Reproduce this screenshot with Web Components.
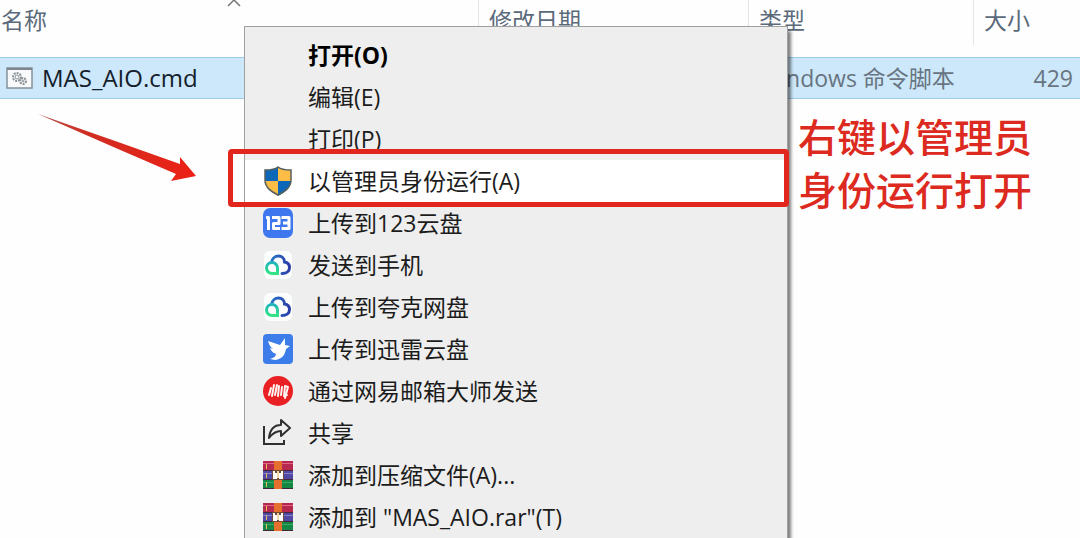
<!DOCTYPE html>
<html lang="zh-CN">
<head>
<meta charset="utf-8">
<meta name="viewport" content="width=device-width, initial-scale=1">
<title>MAS_AIO.cmd</title>
<style>
  body { margin: 0; background: #fefefe; font-family: "Open Sans", "Noto Sans CJK SC", sans-serif; font-size: 23px; }
</style>
</head>
<body>
<explorer-window>
  <file-list></file-list>
  <context-menu slot="overlay">
    <menu-item strong>打开(O)</menu-item>
    <menu-item>编辑(E)</menu-item>
    <menu-item>打印(P)</menu-item>
    <menu-item icon="shield" marked>以管理员身份运行(A)</menu-item>
    <menu-item icon="pan123">上传到123云盘</menu-item>
    <menu-item icon="quark">发送到手机</menu-item>
    <menu-item icon="quark">上传到夸克网盘</menu-item>
    <menu-item icon="bird">上传到迅雷云盘</menu-item>
    <menu-item icon="mail">通过网易邮箱大师发送</menu-item>
    <menu-item icon="share">共享</menu-item>
    <menu-item icon="rar">添加到压缩文件(A)...</menu-item>
    <menu-item icon="rar">添加到 "MAS_AIO.rar"(T)</menu-item>
  </context-menu>
  <pointer-arrow slot="overlay"></pointer-arrow>
  <callout-note slot="overlay">右键以管理员<br>身份运行打开</callout-note>
</explorer-window>

<script>
const define = (name, html, setup) => customElements.define(name, class extends HTMLElement {
  connectedCallback() {
    if (this.shadowRoot) return;
    this.attachShadow({ mode: "open" }).innerHTML = html;
    if (setup) setup(this, this.shadowRoot);
  }
});

const ICONS = {
  shield: `<defs><clipPath id="s"><path d="M15 1C12 3.500 7 4 2 4V14C2 22 9 27 15 30C21 27 28 22 28 14V4C23 4 18 3.500 15 1Z"/></clipPath></defs>
    <g clip-path="url(#s)"><path fill="#0d67b8" d="M0 0H15V15H0zM15 15H30V31H15z"/><path fill="#fbbd45" d="M15 0H30V15H15zM0 15H15V31H0z"/></g>
    <path fill="none" stroke="#56605f" stroke-width="1.500" d="M15 1C12 3.500 7 4 2 4V14C2 22 9 26 15 29C21 26 28 22 28 14V4C23 4 18 3.500 15 1Z"/>`,
  pan123: `<rect width="30" height="30" rx="7" fill="#3f78ee"/><g fill="none" stroke="#fff" stroke-width="3" stroke-linejoin="round"><path d="M3 9.500H5.500V22M9 9.500H16V15.500H10.500V20.500H17M18.500 9.500H26V20.500H18.500M20 15H26"/></g>`,
  quark: `<rect x="1" y="1" width="28" height="28" rx="6" fill="#fcfefe"/><defs><linearGradient id="q" x1="0" y1="1" x2="0" y2="0"><stop stop-color="#33e487"/><stop offset="1" stop-color="#20b5bd"/></linearGradient><linearGradient id="r"><stop stop-color="#2874c8"/><stop offset="1" stop-color="#2a3da8"/></linearGradient></defs>
    <g fill="none" stroke-width="3" stroke-linecap="round"><path stroke="url(#r)" d="M8.500 12.500C9 8.500 12 6 15.500 6C19 6 21.500 8.500 21.500 12C25 12.500 26.500 14.500 26.500 17.500C26.500 21 23.500 23.500 19 23.500"/><path stroke="url(#q)" d="M14.500 23.500V18A5.500 5.500 0 1 0 9 23.500Z"/></g>`,
  bird: `<rect width="30" height="30" rx="4" fill="#3d7de9"/><path fill="#fff" d="M5 7L17 11L22 4L22 11L27 12L23 15C22 20 20 25 12 26L7 25C11 24 13 22 13 20C10 19 8 17 7 14L10 15C7 13 6 10 5 7Z"/>`,
  mail: `<circle cx="15" cy="15" r="15" fill="#e92024"/><g fill="none" stroke="#fff5f2" stroke-width="2" stroke-linecap="round"><path d="M6 19L8 12M9 20L11 9M12 19L14 9M15 20L16 10M18 19L19 11M21 20L22 10M22 22L25 11M22 19H24M22 10L25 11"/></g>`,
  share: `<g fill="none" stroke="#303030" stroke-width="2"><path d="M1 8V26H21V22"/><path stroke-linejoin="round" d="M6 20C7 11 11 7 18 7V2L27 10L18 18V13C13 13 9 16 6 20Z"/></g>`,
  rar: `<rect y="1" width="30" height="10" fill="#b6284d"/><rect y="11" width="30" height="9" fill="#5147a5"/><rect y="20" width="30" height="9" fill="#168644"/>
    <path fill="#df6685" d="M0 3H30V4H0z"/><path fill="#8580ca" d="M0 13H30V14H0z"/><path fill="#35ad68" d="M0 22H30V23H0z"/>
    <path stroke="#43263a" d="M0 10.500H30M0 19.500H30M0 28.500H30"/><path fill="#e7bd5d" d="M3 4H4V9H3zM3 13H4V18H3zM3 22H4V27H3z"/>
    <path fill="#e5702d" d="M11 1H19V29H11z"/><path fill="#6d4939" d="M9 10H21V20H9z"/><path fill="none" stroke="#fff" stroke-width="2" d="M11 11V18H13V13M19 11V18H17V13"/><path fill="#eed8a5" d="M14 11H16V18H14z"/>`
};

define("explorer-window", `
  <style>
    :host { display: block; position: relative; height: 100vh; overflow: hidden; }
  </style>
  <slot></slot><slot name="overlay"></slot>`);

define("file-list", `
  <style>
    :host { display: block; }
    table { width: 100%; border-collapse: separate; border-spacing: 0; table-layout: fixed; color: #687481; }
    .name { width: 479px; } .date { width: 270px; } .type { width: 225px; }
    th { position: relative; height: 45px; padding: 0; border-right: 1px solid #e4e5e7; box-sizing: border-box; vertical-align: top; }
    th:last-child { border: 0; }
    th button { display: block; width: 100%; height: 40px; padding: 0 0 0 10px; border: 0; background: none; font: inherit; font-weight: 400; line-height: 40px; color: #5b6a7a; text-align: left; }
    th:first-child button { padding-left: 1px; }
    th svg { position: absolute; left: 226px; top: 0; }
    .space td { height: 12px; padding: 0; border: 0; background: none; }
    td { height: 42px; box-sizing: border-box; padding: 0 7px 0 10px; background: #cce8fa; border: solid #9cccea; border-width: 1px 0; line-height: 40px; white-space: nowrap; }
    td:first-child { padding-left: 6px; color: #14202c; font-size: 24px; }
    td:last-child { text-align: right; }
    .file { display: flex; align-items: center; gap: 9px; }
  </style>
  <table>
    <colgroup><col class="name"><col class="date"><col class="type"><col></colgroup>
    <thead><tr>
      <th scope="col"><button>名称</button><svg width="16" height="8" fill="none" stroke="#777" stroke-width="1.500"><path d="M2 6L8 0L14 6"/></svg></th>
      <th scope="col"><button>修改日期</button></th>
      <th scope="col"><button>类型</button></th>
      <th scope="col"><button>大小</button></th>
    </tr></thead>
    <tbody>
      <tr class="space" aria-hidden="true"><td colspan="4"></td></tr>
      <tr>
        <td><span class="file">
          <svg width="27" height="22" fill="none"><rect x="1" y="1" width="25" height="20" fill="#f8fafb" stroke="#84919b" stroke-width="1.500"/><path d="M1 2H26" stroke="#7d858e" stroke-width="2"/><g stroke="#8b9196"><circle cx="11" cy="10" r="4" stroke-width="2" stroke-dasharray="2 1"/><circle cx="11" cy="10" r="2"/><circle cx="17" cy="14" r="3" stroke-width="2" stroke-dasharray="2 1"/><circle cx="17" cy="14" r="1"/></g></svg>
          MAS_AIO.cmd</span></td>
        <td></td>
        <td>Windows 命令脚本</td>
        <td>429</td>
      </tr>
    </tbody>
  </table>`);

define("context-menu", `
  <style>
    :host { position: absolute; left: 244px; top: 26px; width: 544px; box-sizing: border-box; padding: 7px 0; background: #eee; border: 1px solid #a0a0a0; box-shadow: 4px 4px 3px -1px rgba(0, 0, 0, .5); }
    nav { display: flex; flex-direction: column; }
  </style>
  <nav><slot></slot></nav>`);

define("menu-item", `
  <style>
    :host { display: block; position: relative; }
    button { display: flex; align-items: center; gap: 15px; width: 100%; height: 42px; padding: 0 18px; border: 0; background: none; font: inherit; color: #1c1c1c; text-align: left; white-space: nowrap; }
    svg { flex: none; width: 30px; height: 30px; }
    span { padding-bottom: 2px; }
    :host([strong]) button { font-weight: 700; color: #000; }
    :host([marked]) button { background: #fff; }
    :host([marked])::after { content: ""; position: absolute; inset: -11px -2px -5px -17px; border: 5px solid #e0261d; border-radius: 4px; pointer-events: none; z-index: 1; }
  </style>
  <button><svg viewBox="0 0 30 30" aria-hidden="true"></svg><span><slot></slot></span></button>`,
  (host, root) => { root.querySelector("svg").innerHTML = ICONS[host.getAttribute("icon")] || ""; });

define("pointer-arrow", `
  <style>:host { position: absolute; left: 38px; top: 114px; } svg { display: block; }</style>
  <svg width="160" height="70" aria-hidden="true"><defs><linearGradient id="a"><stop stop-color="#b5534b"/><stop offset=".3" stop-color="#cf2e24"/><stop offset="1" stop-color="#ed2014"/></linearGradient></defs>
    <path fill="url(#a)" d="M0 0L80 28L142 50L142 43L158 62L133 67L138 60L80 35Z"/></svg>`);

define("callout-note", `
  <style>:host { position: absolute; left: 798px; top: 110px; font-size: 39px; font-weight: 500; line-height: 53px; color: #dc2a20; white-space: nowrap; }</style>
  <slot></slot>`);
</script>
</body>
</html>
